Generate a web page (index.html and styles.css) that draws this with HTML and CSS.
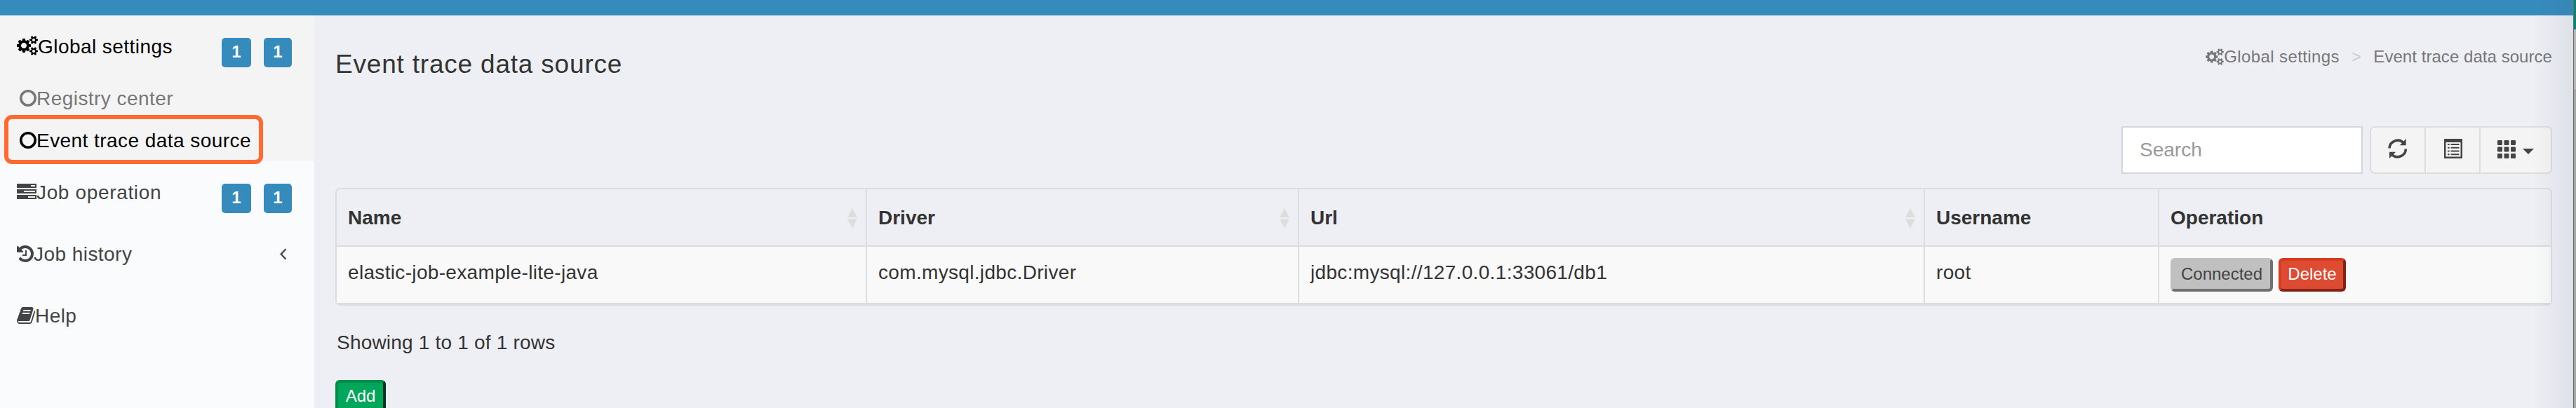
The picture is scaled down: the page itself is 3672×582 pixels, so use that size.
FILE: index.html
```html
<!DOCTYPE html>
<html lang="en">
<head>
<meta charset="utf-8">
<title>Event trace data source</title>
<link rel="stylesheet" href="styles.css">
</head>
<body>
<svg class="defs" width="0" height="0" aria-hidden="true">
  <symbol id="cogs" viewBox="0 0 1920 1792"><path d="M896 896q0-106-75-181t-181-75-181 75-75 181 75 181 181 75 181-75 75-181zm768 512q0-52-38-90t-90-38-90 38-38 90q0 53 37.5 90.5t90.5 37.5 90.5-37.5 37.5-90.5zm0-1024q0-52-38-90t-90-38-90 38-38 90q0 53 37.5 90.5t90.5 37.5 90.5-37.5 37.5-90.5zm-384 421v185q0 10-7 19.5t-16 10.5l-155 24q-11 35-32 76 34 48 90 115 7 11 7 20 0 12-7 19-23 30-82.5 89.5t-78.5 59.5q-11 0-21-7l-115-90q-37 19-77 31-11 108-23 155-7 24-30 24h-186q-11 0-20-7.5t-10-17.5l-23-153q-34-10-75-31l-118 89q-7 7-20 7-11 0-21-8-144-133-144-160 0-9 7-19 10-14 41-53t47-61q-23-44-35-82l-152-24q-10-1-17-9.5t-7-19.5v-185q0-10 7-19.5t16-10.5l155-24q11-35 32-76-34-48-90-115-7-11-7-20 0-12 7-20 22-30 82-89t79-59q11 0 21 7l115 90q34-18 77-32 11-108 23-154 7-24 30-24h186q11 0 20 7.5t10 17.5l23 153q34 10 75 31l118-89q8-7 20-7 11 0 21 8 144 133 144 160 0 8-7 19-12 16-42 54t-45 60q23 48 34 82l152 23q10 2 17 10.5t7 19.5zm640 533v140q0 16-149 31-12 27-30 52 51 113 51 138 0 4-4 7-122 71-124 71-8 0-46-47t-52-68q-20 2-30 2t-30-2q-14 21-52 68t-46 47q-2 0-124-71-4-3-4-7 0-25 51-138-18-25-30-52-149-15-149-31v-140q0-16 149-31 13-29 30-52-51-113-51-138 0-4 4-7 4-2 35-20t59-34 30-16q8 0 46 46.5t52 67.5q20-2 30-2t30 2q51-71 92-112l6-2q4 0 124 70 4 3 4 7 0 25-51 138 17 23 30 52 149 15 149 31zm0-1024v140q0 16-149 31-12 27-30 52 51 113 51 138 0 4-4 7-122 71-124 71-8 0-46-47t-52-68q-20 2-30 2t-30-2q-14 21-52 68t-46 47q-2 0-124-71-4-3-4-7 0-25 51-138-18-25-30-52-149-15-149-31v-140q0-16 149-31 13-29 30-52-51-113-51-138 0-4 4-7 4-2 35-20t59-34 30-16q8 0 46 46.5t52 67.5q20-2 30-2t30 2q51-71 92-112l6-2q4 0 124 70 4 3 4 7 0 25-51 138 17 23 30 52 149 15 149 31z"/></symbol>
  <symbol id="ring" viewBox="0 0 24 24"><circle cx="12" cy="12" r="10.2" fill="none" stroke="currentColor" stroke-width="3.6"/></symbol>
  <symbol id="sort" viewBox="0 0 14 29"><path d="M7 0l7 13H0zM0 15.500h14L7 29z"/></symbol>
</svg>

<div class="page">
  <div class="app">
    <header class="topbar"></header>
    <div class="body">
      <aside class="sidebar">
        <nav>
          <div class="group active">
            <a class="item">
              <svg class="icon cogs"><use href="#cogs"/></svg><span class="label">Global settings</span>
              <span class="badges"><b class="badge wide">1</b><b class="badge">1</b></span>
            </a>
            <a class="subitem"><svg class="icon ring"><use href="#ring"/></svg><span>Registry center</span></a>
            <a class="subitem current"><svg class="icon ring"><use href="#ring"/></svg><span>Event trace data source</span></a>
          </div>
          <a class="item">
            <svg class="icon tasks" viewBox="0 0 28 22"><path fill-rule="evenodd" d="M0 0h28v6H0zM20 2v2h6V2zM0 8h28v6H0zM10 10v2h16v-2zM0 16h28v6H0zM16 18v2h10v-2z"/></svg><span class="label loose">Job operation</span>
            <span class="badges"><b class="badge wide">1</b><b class="badge">1</b></span>
          </a>
          <a class="item">
            <svg class="icon history" viewBox="0 128 1536 1536"><path d="M1536 896q0 156-61 298t-164 245-245 164-298 61q-172 0-327-72.500t-264-204.500q-7-10-6.500-22.500t8.500-20.500l137-138q10-9 25-9 16 2 23 12 73 95 179 147t225 52q104 0 198.500-40.500t163.500-109.500 109.500-163.500 40.500-198.500-40.500-198.500-109.500-163.500-163.500-109.500-198.500-40.500q-98 0-188 35.500t-160 101.500l137 138q31 30 14 69-17 40-59 40h-448q-26 0-45-19t-19-45v-448q0-42 40-59 39-17 69 14l130 129q107-101 244.500-156.500t284.500-55.500q156 0 298 61t245 164 164 245 61 298zm-640-288v448q0 14-9 23t-23 9h-320q-14 0-23-9t-9-23v-64q0-14 9-23t23-9h224v-352q0-14 9-23t23-9h64q14 0 23 9t9 23z"/></svg><span class="label">Job history</span>
            <svg class="chevron" viewBox="0 0 10 17"><path d="M8.500 1.200L1.600 8.500l6.900 7.300"/></svg>
          </a>
          <a class="item">
            <svg class="icon book" viewBox="0 128 1664 1536"><path d="M1639 478q40 57 18 129l-275 906q-19 64-76.500 107.500t-122.500 43.500h-923q-77 0-148.500-53.500t-99.500-131.500q-24-67-2-127 0-4 3-27t4-37q1-8-3-21.500t-3-19.500q2-11 8-21t16.500-23.500 16.500-23.500q23-38 45-91.500t30-91.500q3-10 .5-30t-.5-28q3-11 17-28t17-23q21-36 42-92t25-90q1-9-2.500-32t.5-28q4-13 22-30.500t22-22.500q19-26 42.500-84.500t27.500-96.500q1-8-3-25.500t-2-26.500q2-8 9-18t18-23 17-21q8-12 16.500-30.500t15-35 16-36 19.500-32 26.500-23.500 36-11.500 47.500 5.500l-1 3q38-9 51-9h761q74 0 114 56t18 130l-274 906q-36 119-71.500 153.500t-128.500 34.500h-869q-27 0-38 15-11 16-1 43 24 70 144 70h923q29 0 56-15.500t35-41.500l300-987q7-22 5-57 38 15 59 43zm-1064 2q-4 13 2 22.500t20 9.500h608q13 0 25.500-9.500t16.500-22.500l21-64q4-13-2-22.500t-20-9.500h-608q-13 0-25.500 9.500t-16.500 22.500zm-83 256q-4 13 2 22.500t20 9.500h608q13 0 25.500-9.500t16.500-22.500l21-64q4-13-2-22.500t-20-9.500h-608q-13 0-25.500 9.500t-16.500 22.500z"/></svg><span class="label">Help</span>
          </a>
        </nav>
        <div class="highlight"></div>
      </aside>

      <main class="content">
        <div class="heading">
          <h1>Event trace data source</h1>
          <div class="breadcrumb">
            <svg class="icon"><use href="#cogs"/></svg><span class="root">Global settings</span><span class="sep">&gt;</span><span class="leaf">Event trace data source</span>
          </div>
        </div>

        <div class="toolbar">
          <input class="search" type="text" placeholder="Search">
          <div class="tools">
            <button class="tool"><svg width="28" height="28" viewBox="0 0 28 28"><path d="M2 13.500A11.700 11.700 0 0 1 22.500 6.300" fill="none" stroke="currentColor" stroke-width="3.600"/><path d="M25.700 0v9.200H16.800z"/><path d="M25.400 14.500A11.700 11.700 0 0 1 4.900 21.700" fill="none" stroke="currentColor" stroke-width="3.600"/><path d="M2 28v-9.200h9z"/></svg></button>
            <button class="tool list"><svg width="26" height="28" viewBox="0 0 26 28"><path fill-rule="evenodd" d="M0 0h26v28H0zM2.500 5v20.500h21V5z"/><path d="M5 7h2.600v2H5zM9.500 7h12v2h-12zM5 11.800h2.600v2H5zM9.500 11.800h12v2h-12zM5 16.500h2.600v2H5zM9.500 16.500h12v2h-12zM5 21.200h2.600v2H5zM9.500 21.200h12v2h-12z"/></svg></button>
            <button class="tool menu"><svg width="26" height="26" viewBox="0 0 26 26"><g><rect width="7" height="7" rx="1.200"/><rect x="9.500" width="7" height="7" rx="1.200"/><rect x="19" width="7" height="7" rx="1.200"/><rect y="9.500" width="7" height="7" rx="1.200"/><rect x="9.500" y="9.500" width="7" height="7" rx="1.200"/><rect x="19" y="9.500" width="7" height="7" rx="1.200"/><rect y="19" width="7" height="7" rx="1.200"/><rect x="9.500" y="19" width="7" height="7" rx="1.200"/><rect x="19" y="19" width="7" height="7" rx="1.200"/></g></svg><svg class="caret" width="16" height="8" viewBox="0 0 16 8"><path d="M0 0h16L8 8z"/></svg></button>
          </div>
        </div>

        <div class="table-box">
          <table>
            <colgroup><col class="c-name"><col class="c-driver"><col class="c-url"><col class="c-user"><col></colgroup>
            <thead>
              <tr>
                <th><div class="th">Name<svg class="sort"><use href="#sort"/></svg></div></th>
                <th><div class="th">Driver<svg class="sort"><use href="#sort"/></svg></div></th>
                <th><div class="th">Url<svg class="sort"><use href="#sort"/></svg></div></th>
                <th><div class="th">Username</div></th>
                <th><div class="th">Operation</div></th>
              </tr>
            </thead>
            <tbody>
              <tr>
                <td>elastic-job-example-lite-java</td>
                <td>com.mysql.jdbc.Driver</td>
                <td>jdbc:mysql://127.0.0.1:33061/db1</td>
                <td>root</td>
                <td><div class="ops"><button class="btn connected">Connected</button><button class="btn delete">Delete</button></div></td>
              </tr>
            </tbody>
          </table>
        </div>
        <p class="summary">Showing 1 to 1 of 1 rows</p>
        <button class="btn add">Add</button>
      </main>
    </div>
    <div class="edge-shade"></div>
  </div>
  <div class="edge"><i class="e1"></i><i class="e2"></i><i class="e3"></i></div>
</div>
</body>
</html>
```
FILE: styles.css
```css
* { box-sizing: border-box; }
html, body { margin: 0; height: 582px; overflow: hidden; }
body {
  font: 28px/40px "Liberation Sans", Arial, sans-serif;
  letter-spacing: .33px;
  color: #333;
  background: #edeff4;
}
button, input { font: inherit; letter-spacing: inherit; margin: 0; }
svg { display: block; fill: currentColor; flex: none; }
.defs { position: absolute; }

.page { display: flex; height: 582px; }
.app { flex: 1; display: flex; flex-direction: column; position: relative; }
.topbar { height: 22px; background: #368bbd; flex: none; }
.body { flex: 1; display: flex; min-height: 0; }

/* Sidebar */
.sidebar { width: 448px; background: #f9fbfc; color: #444; position: relative; flex: none; letter-spacing: .45px; }
.group.active { background: #f4f4f5; }
.group.active .item { color: #000; }
.item { display: flex; align-items: flex-start; height: 88px; padding: 25px 32px 0 24px; }
.label { flex: 1; white-space: nowrap; }
.label.loose { letter-spacing: .65px; }
.icon.cogs { width: 30px; height: 28px; margin-top: 4px; }
.icon.tasks { width: 28px; height: 22px; margin-top: 7px; }
.icon.history { width: 24px; height: 24px; margin-top: 7px; }
.icon.book { width: 26px; height: 24px; margin-top: 7px; }
.badges { display: flex; gap: 18px; margin-top: 7px; }
.badge {
  width: 40px; height: 42px; border-radius: 5px;
  background: #368bbd; color: #fff;
  font-size: 24px; line-height: 39px; text-align: center; letter-spacing: 0;
}
.badge.wide { width: 42px; }
.chevron { width: 10px; height: 17px; margin: 11px 7px 0 0; fill: none; stroke: #444; stroke-width: 2.4; }
.subitem { display: flex; height: 60px; padding: 11px 0 0 28px; color: #777; white-space: nowrap; }
.subitem.current { color: #000; }
.icon.ring { width: 24px; height: 24px; margin: 7px 0 0; }
.highlight {
  position: absolute; left: 6px; top: 142px; width: 369px; height: 70px;
  border: 6px solid #ff6932; border-radius: 11px;
}

/* Content */
.content { flex: 1; padding: 0 30px; display: flex; flex-direction: column; align-items: stretch; }
.heading { display: flex; justify-content: space-between; height: 158px; flex: none; }
h1 { margin: 50px 0 0; font-size: 37px; line-height: 40px; font-weight: 400; letter-spacing: .8px; }
.breadcrumb { display: flex; margin-top: 44px; font-size: 24px; line-height: 30px; color: #777; }
.breadcrumb .icon { width: 26px; height: 24px; margin-top: 3px; }
.root { letter-spacing: .4px; }
.sep { color: #ccc; margin: 0 17px 0 17px; }
.leaf { letter-spacing: .05px; }

.toolbar { display: flex; justify-content: flex-end; gap: 10px; height: 68px; flex: none; }
.search { width: 344px; height: 68px; border: 2px solid #d2d6de; border-radius: 0; background: #fff; padding: 0 24px; letter-spacing: 0; }
.search::placeholder { color: #999; opacity: 1; }
.tools { display: flex; width: 260px; border: 2px solid #ddd; border-radius: 7px; background: #f4f4f4; }
.tool { width: 79px; border: 0; border-right: 2px solid #ddd; background: none; padding: 0; color: #444; display: flex; align-items: center; justify-content: center; }
.tool svg { margin-top: -4px; }
.tool.list { padding-left: 2px; }
.tool.menu { width: 102px; border: 0; gap: 10px; }
.tool.menu svg { margin-top: -2px; }
.tool.menu .caret { margin-top: 4px; }

.table-box { margin-top: 20px; height: 168px; flex: none; border: 2px solid #ddd; border-bottom: 4px solid #dcdddd; border-radius: 7px; }
table { width: 100%; table-layout: fixed; border-collapse: separate; border-spacing: 0; }
.c-name { width: 756px; }
.c-driver { width: 616px; }
.c-url { width: 892px; }
.c-user { width: 334px; }
th, td { padding: 0; text-align: left; vertical-align: top; border-right: 2px solid #ddd; }
th:last-child, td:last-child { border-right: 0; }
th { height: 82px; border-bottom: 2px solid #d8dbe0; letter-spacing: 0; }
.th { display: flex; justify-content: space-between; padding: 21px 12px 0 16px; }
.sort { width: 14px; height: 29px; margin-top: 6px; color: #ddd; }
td { height: 80px; padding: 17px 0 0 16px; background: #f9f9f9; }
.ops { display: flex; gap: 8px; margin-top: -1px; }

.btn {
  height: 48px; border: 4px solid; border-radius: 6px;
  font-size: 24px; line-height: 38px; letter-spacing: 0; padding: 0 0 2px; white-space: nowrap;
}
.connected { width: 146px; background: #c0c0c0; color: #444; border-color: #c0c0c0 #707070 #707070 #c0c0c0; }
.delete { width: 96px; background: #dd4b32; color: #fff; border-color: #d73a1c #832412 #832412 #d73a1c; }
.add { width: 72px; align-self: flex-start; flex: none; margin-top: 33px; background: #00a65a; color: #fff; border-color: #008d4c #00381e #00381e #008d4c; }
.summary { margin: 33px 0 0 2px; letter-spacing: .2px; }

/* Right edge of the window */
.edge-shade { position: absolute; top: 0; right: 0; bottom: 0; width: 56px; background: linear-gradient(90deg, rgba(60, 80, 110, 0), rgba(60, 80, 110, .09)); pointer-events: none; }
.edge { width: 4px; display: flex; flex-direction: column; border-left: 1px solid rgba(0, 0, 0, .35); background: #a5a5a5; }
.e1 { height: 42px; background: #078573; }
.e2 { height: 88px; background: #b8b8b8; border-bottom: 2px solid #999; }
.e3 { flex: 1; background: #a7a5a5; }
```
